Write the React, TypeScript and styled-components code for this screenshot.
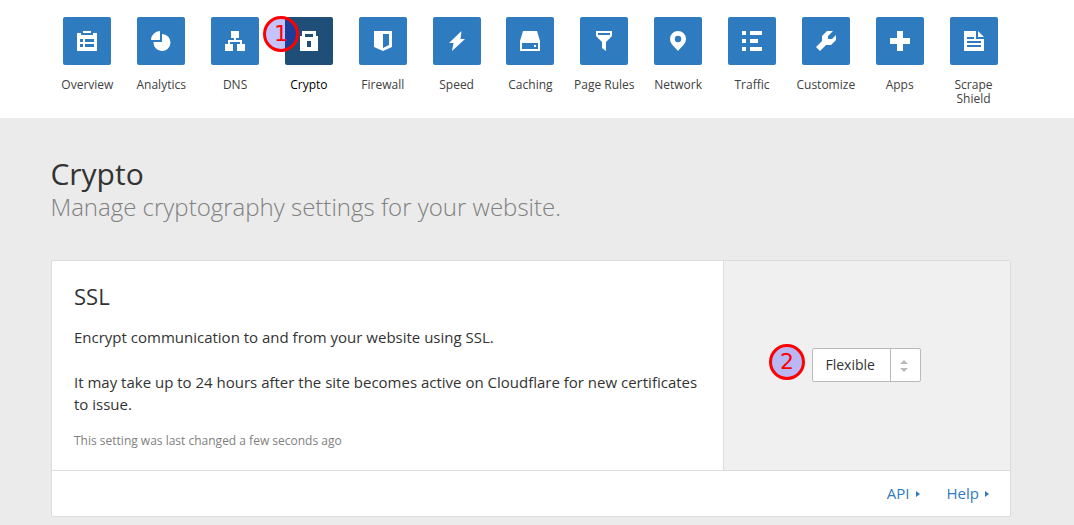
import React from 'react';
import styled, { createGlobalStyle } from 'styled-components';

const GlobalStyle = createGlobalStyle`
  * { box-sizing: border-box; }
  body {
    margin: 0;
    height: 525px;
    overflow: hidden;
    background: #ebebeb;
    color: #333;
    font-family: 'Open Sans', 'Noto Sans', sans-serif;
    font-size: 15px;
    line-height: 22px;
  }
`;

const Nav = styled.nav`
  display: flex;
  height: 118px;
  padding: 17px 0 0 50.46px;
  background: #fff;
`;

const NavItem = styled.a<{ $active?: boolean }>`
  position: relative;
  display: flex;
  flex-direction: column;
  align-items: center;
  flex: 0 0 73.846px;
  color: ${(p) => (p.$active ? '#000' : '#404040')};
`;

const Tile = styled.span<{ $active?: boolean }>`
  display: flex;
  align-items: center;
  justify-content: center;
  width: 48px;
  height: 48px;
  border-radius: 2px;
  background: ${(p) => (p.$active ? '#1f4e79' : '#2f7bbf')};
`;

const Icon = styled.svg`
  display: block;
  width: 20px;
  height: 20px;
  fill: #fff;
`;

const NavLabel = styled.span<{ $narrow?: boolean }>`
  margin-top: 13px;
  width: ${(p) => (p.$narrow ? '48px' : 'auto')};
  font-size: 12px;
  line-height: 14px;
  text-align: center;
  white-space: ${(p) => (p.$narrow ? 'normal' : 'nowrap')};
`;

const Badge = styled.span<{ $left: number; $top: number }>`
  position: absolute;
  left: ${(p) => p.$left}px;
  top: ${(p) => p.$top}px;
  display: flex;
  align-items: center;
  justify-content: center;
  width: 36px;
  height: 36px;
  border: 3px solid #f00;
  border-radius: 50%;
  background: rgba(20, 10, 255, 0.25);
  color: #f00;
  font: 22px/30px 'DejaVu Sans', sans-serif;
`;

const Main = styled.main`
  width: 960px;
  margin-left: 51px;
  padding-top: 38px;
`;

const PageHeader = styled.header`
  margin: 0 0 38px -0.6px;
`;

const Title = styled.h1`
  margin: 0;
  font-size: 30px;
  font-weight: 400;
  line-height: 36px;
`;

const Subtitle = styled.p`
  margin: 0;
  color: #808080;
  font-size: 24px;
  font-weight: 300;
  line-height: 30px;
`;

const Card = styled.section`
  height: 257px;
  border: 1px solid #dcdcdc;
  border-radius: 2px;
  background: #fff;
`;

const CardBody = styled.div`
  display: flex;
  height: 210px;
  border-bottom: 1px solid #dcdcdc;
`;

const Description = styled.div`
  width: 672px;
  padding: 21px 22px;
  border-right: 1px solid #dcdcdc;
`;

const Heading = styled.h2`
  margin: 0 0 16px;
  font-size: 22px;
  font-weight: 400;
  line-height: 28px;
`;

const Text = styled.p`
  margin: 0 0 23px;
`;

const Note = styled.p`
  margin: -6.5px 0 0;
  color: #808080;
  font-size: 12px;
  line-height: 18px;
`;

const Control = styled.div`
  position: relative;
  flex: 1;
  display: flex;
  align-items: center;
  justify-content: center;
  background: #f0f0f0;
`;

const Select = styled.div`
  display: flex;
  width: 109px;
  height: 34px;
  margin: 0 1px 2px 0;
  border: 1px solid #bababa;
  border-radius: 2px;
  background: #fff;
  font-size: 14px;
  line-height: 32px;
`;

const SelectValue = styled.span`
  width: 78px;
  padding-left: 12.5px;
  border-right: 1px solid #bababa;
`;

const Arrows = styled.svg`
  display: block;
  width: 8px;
  height: 12px;
  margin: 11px 0 0 9px;
  fill: #bababa;
`;

const CardFooter = styled.footer`
  display: flex;
  justify-content: flex-end;
  gap: 27px;
  padding: 11px 21px 0 0;
`;

const FooterLink = styled.a`
  display: flex;
  align-items: center;
  gap: 6px;
  color: #2f7bbf;
`;

const Caret = styled.svg`
  width: 4px;
  height: 6px;
  margin-top: 2px;
  fill: #2f7bbf;
`;

const items: { label: string; path: string; narrow?: boolean }[] = [
  { label: 'Overview', path: 'M6 0h8v2H6zM0 2h4v2h12V2h4v18H0zM3 8v3h3V8zm5 0v3h9V8zM3 13v3h3v-3zm5 0v3h9v-3z' },
  { label: 'Analytics', path: 'M9 0v9H0A9 9 0 0 1 9 0zM11 3a8.5 8.5 0 1 1-8.5 8H11z' },
  { label: 'DNS', path: 'M6 0h8v7h-3v2h6v4h3v7h-8v-7h3v-2H5v2h3v7H0v-7h3V9h6V7H6z' },
  { label: 'Crypto', path: 'M3 0h14v5h2v15H1V5h2zM6 3v3h8V3zM8 10v6h4v-6z' },
  { label: 'Firewall', path: 'M1 0h18v16l-9 4-9-4zM10 3v14l6-3V3z' },
  { label: 'Speed', path: 'M14.5 0l-1 8H18L5 20l1.5-8H2z' },
  { label: 'Caching', path: 'M3 0h14l3 10v10H0V10zM2 12v6h16v-6zM14 14h2v2h-2z' },
  { label: 'Page Rules', path: 'M2 0h16v5l-6 6v9l-4-3v-6L2 5zM4 2v2h12V2z' },
  { label: 'Network', path: 'M10 0a8 8 0 0 1 8 8c0 5-5 8-8 12C7 16 2 13 2 8a8 8 0 0 1 8-8zm0 4.8a3.2 3.2 0 1 0 0 6.4 3.2 3.2 0 0 0 0-6.4z' },
  { label: 'Traffic', path: 'M0 0h4v4H0zM8 0h12v4H8zM0 8h4v4H0zM8 8h8v4H8zM0 16h4v4H0zM8 16h12v4H8z' },
  { label: 'Customize', path: 'M11 0h6l-5 5v3h4l4-4v5l-5 5h-5l-6 6-4-4 6-6V5z' },
  { label: 'Apps', path: 'M7 0h6v7h7v6h-7v7H7v-7H0V7h7z' },
  { label: 'Scrape Shield', narrow: true, path: 'M0 0h12v8h8v12H0zM14 0l6 6h-6zM3 6v2h7V6zm0 4v2h14v-2zm0 4v2h14v-2z' },
];

export default function App() {
  return (
    <>
      <GlobalStyle />
      <Nav>
        {items.map(({ label, path, narrow }) => {
          const active = label === 'Crypto';
          return (
            <NavItem key={label} $active={active}>
              <Tile $active={active}>
                <Icon viewBox="0 0 20 20"><path fillRule="evenodd" d={path} /></Icon>
              </Tile>
              {active && <Badge $left={-9} $top={-1}>1</Badge>}
              <NavLabel $narrow={narrow}>{label}</NavLabel>
            </NavItem>
          );
        })}
      </Nav>
      <Main>
        <PageHeader>
          <Title>Crypto</Title>
          <Subtitle>Manage cryptography settings for your website.</Subtitle>
        </PageHeader>
        <Card>
          <CardBody>
            <Description>
              <Heading>SSL</Heading>
              <Text>Encrypt communication to and from your website using SSL.</Text>
              <Text>It may take up to 24 hours after the site becomes active on Cloudflare for new certificates to issue.</Text>
              <Note>This setting was last changed a few seconds ago</Note>
            </Description>
            <Control>
              <Badge $left={45} $top={83}>2</Badge>
              <Select>
                <SelectValue>Flexible</SelectValue>
                <Arrows viewBox="0 0 8 12"><path d="M4 0l4 4H0zM0 8h8l-4 4z" /></Arrows>
              </Select>
            </Control>
          </CardBody>
          <CardFooter>
            <FooterLink>API <Caret viewBox="0 0 4 6"><path d="M0 0l4 3-4 3z" /></Caret></FooterLink>
            <FooterLink>Help <Caret viewBox="0 0 4 6"><path d="M0 0l4 3-4 3z" /></Caret></FooterLink>
          </CardFooter>
        </Card>
      </Main>
    </>
  );
}
